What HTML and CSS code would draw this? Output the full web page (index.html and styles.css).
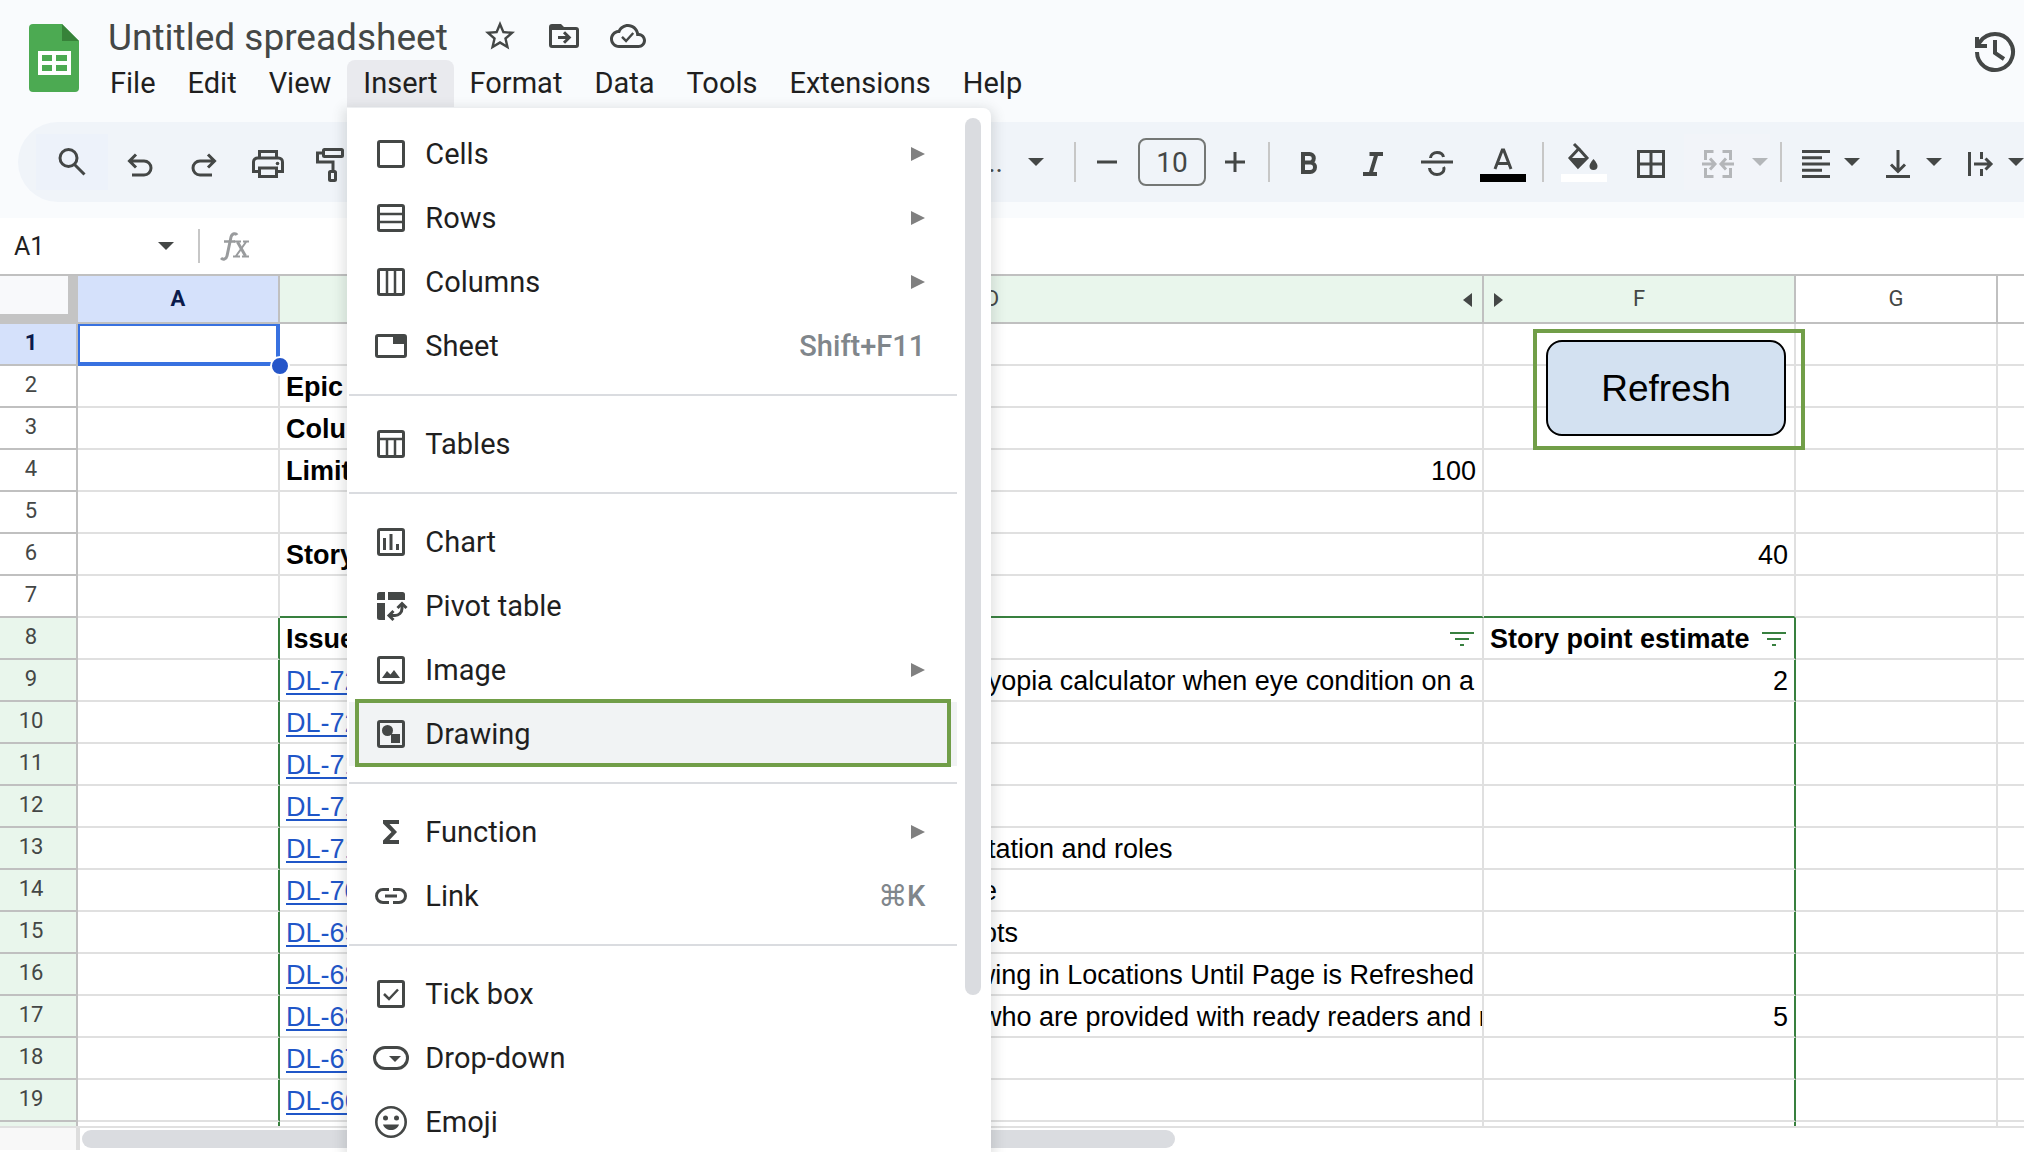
FILE: index.html
```html
<!DOCTYPE html>
<html lang="en">
<head>
<meta charset="utf-8">
<title>Untitled spreadsheet</title>
<link rel="stylesheet" href="styles.css">
</head>
<body>
<div class="app">
  <header class="header">
    <svg class="logo" viewBox="0 0 50 68" aria-hidden="true">
      <path fill="#4caa52" d="M4 0h29l17 17v47a4 4 0 0 1-4 4H4a4 4 0 0 1-4-4V4a4 4 0 0 1 4-4z"/>
      <path fill="#378239" d="M33 0l17 17H33z"/>
      <path fill="#fff" fill-rule="evenodd" d="M9 27h33v24H9zM13 31v6h10v-6zm14 0v6h11v-6zM13 41v6h10v-6zm14 0v6h11v-6z"/>
    </svg>
    <div class="heading">
      <div class="title-row">
        <h1 class="title">Untitled spreadsheet</h1>
        <button class="icon-button" aria-label="Star"><svg class="icon" viewBox="0 0 24 24"><path fill="currentColor" d="M22 9.24l-7.19-.62L12 2 9.19 8.63 2 9.24l5.46 4.73L5.82 21 12 17.27 18.18 21l-1.63-7.03L22 9.24zM12 15.4l-3.76 2.27 1-4.28-3.32-2.88 4.38-.38L12 6.1l1.71 4.04 4.38.38-3.32 2.88 1 4.28L12 15.4z"/></svg></button>
        <button class="icon-button" aria-label="Move"><svg class="icon" viewBox="0 0 24 24"><path fill="currentColor" d="M20 6h-8l-2-2H4a2 2 0 0 0-2 2v12a2 2 0 0 0 2 2h16a2 2 0 0 0 2-2V8a2 2 0 0 0-2-2zm0 12H4V8h16v10z"/><path fill="none" stroke="currentColor" stroke-width="2" d="M8 13h7M12 9.5l3.5 3.5-3.500 3.500"/></svg></button>
        <button class="icon-button" aria-label="Saved to Drive"><svg class="icon" viewBox="0 0 24 24"><path fill="currentColor" d="M19.350 10.040C18.670 6.590 15.640 4 12 4 9.110 4 6.600 5.640 5.350 8.040 2.340 8.360 0 10.910 0 14c0 3.310 2.690 6 6 6h13c2.760 0 5-2.240 5-5 0-2.640-2.050-4.780-4.650-4.960zM19 18H6c-2.210 0-4-1.790-4-4s1.790-4 4-4h.710C7.370 7.690 9.480 6 12 6c3.040 0 5.500 2.460 5.500 5.500v.5H19c1.660 0 3 1.340 3 3s-1.340 3-3 3z"/><path fill="none" stroke="currentColor" stroke-width="1.600" d="M8 12.600l2.700 2.700 4.800-5.300"/></svg></button>
      </div>
      <nav class="menubar" aria-label="Main menu">
        <button class="menu-button">File</button>
        <button class="menu-button">Edit</button>
        <button class="menu-button">View</button>
        <div class="menu-anchor">
          <button class="menu-button is-open" aria-expanded="true">Insert</button>
          <div class="dropdown" role="menu">
            <div class="group">
              <button class="item" role="menuitem"><svg class="icon line" viewBox="0 0 36 36"><rect x="5.500" y="5.500" width="25" height="25" rx="1.500"/></svg>Cells<span class="arrow"></span></button>
              <button class="item" role="menuitem"><svg class="icon line" viewBox="0 0 36 36"><rect x="5.500" y="5.500" width="25" height="25" rx="1.500"/><path stroke-width="2.500" d="M5 14h26M5 22h26"/></svg>Rows<span class="arrow"></span></button>
              <button class="item" role="menuitem"><svg class="icon line" viewBox="0 0 36 36"><rect x="5.500" y="5.500" width="25" height="25" rx="1.500"/><path stroke-width="2.500" d="M14 5v26M22 5v26"/></svg>Columns<span class="arrow"></span></button>
              <button class="item" role="menuitem"><svg class="icon line" viewBox="0 0 36 36"><rect x="3.500" y="7.500" width="29" height="21" rx="1.500"/><path class="solid" d="M20 7h12v9H20z"/></svg>Sheet<kbd class="shortcut">Shift+F11</kbd></button>
            </div>
            <div class="group">
              <button class="item" role="menuitem"><svg class="icon line" viewBox="0 0 36 36"><rect x="5.500" y="5.500" width="25" height="25" rx="1.500"/><path stroke-width="2.500" d="M5 13h26M14 13v18M22 13v18"/></svg>Tables</button>
            </div>
            <div class="group">
              <button class="item" role="menuitem"><svg class="icon line" viewBox="0 0 36 36"><rect x="5.500" y="5.500" width="25" height="25" rx="1.500"/><path d="M11.500 14v12M18 10v16M24.500 20v6"/></svg>Chart</button>
              <button class="item" role="menuitem"><svg class="icon line" viewBox="0 0 36 36"><path class="solid" d="M6.500 4H12v8H4V6.500A2.500 2.500 0 0 1 6.500 4zM15 4h14.500A2.500 2.500 0 0 1 32 6.500V12H15zM4 15h8v17H6.500A2.500 2.500 0 0 1 4 29.500z"/><path d="M17 27.500h5a7 7 0 0 0 7-7V17"/><path d="M24.500 20l4.500-4.500 4.500 4.500M20.500 23L16 27.500l4.500 4.500"/></svg>Pivot table</button>
              <button class="item" role="menuitem"><svg class="icon line" viewBox="0 0 36 36"><rect x="5.500" y="5.500" width="25" height="25" rx="1.500"/><path class="solid" d="M9 26l5-7 3.500 3.500L21 18l6 8z"/></svg>Image<span class="arrow"></span></button>
              <button class="item is-active" role="menuitem"><svg class="icon line" viewBox="0 0 36 36"><rect x="5.500" y="5.500" width="25" height="25" rx="1.500"/><circle class="solid" cx="14.500" cy="14.500" r="5.500"/><path class="solid" d="M18 18h9v9h-9z"/></svg>Drawing<span class="callout"></span></button>
            </div>
            <div class="group">
              <button class="item" role="menuitem"><svg class="icon" viewBox="0 0 36 36"><path fill="currentColor" d="M10 6h16v4H16.500l7.500 8-7.500 8H26v4H10v-3.500l8.500-8.500L10 9.500z"/></svg>Function<span class="arrow"></span></button>
              <button class="item" role="menuitem"><svg class="icon line" viewBox="0 0 36 36"><path d="M16 11.500h-6a6.500 6.500 0 0 0 0 13h6M20 11.500h6a6.500 6.500 0 0 1 0 13h-6M12 18h12"/></svg>Link<kbd class="shortcut">⌘K</kbd></button>
            </div>
            <div class="group">
              <button class="item" role="menuitem"><svg class="icon line" viewBox="0 0 36 36"><rect x="5.500" y="5.500" width="25" height="25" rx="1.500"/><path stroke-width="2.500" d="M11 18l5 5 9-9.500"/></svg>Tick box</button>
              <button class="item" role="menuitem"><svg class="icon line" viewBox="0 0 36 36"><rect x="1.500" y="7.500" width="33" height="21" rx="10.500"/><path class="solid" d="M16 16h12l-6 6z"/></svg>Drop-down</button>
              <button class="item" role="menuitem"><svg class="icon line" viewBox="0 0 36 36"><circle cx="18" cy="18" r="14.700" stroke-width="2.600"/><circle class="solid" cx="12.500" cy="14" r="2.500"/><circle class="solid" cx="23.500" cy="14" r="2.500"/><path class="solid" d="M10 20.500h16c-1 3.500-4.300 5.500-8 5.500s-7-2-8-5.500z"/></svg>Emoji</button>
            </div>
            <span class="menu-thumb"></span>
          </div>
        </div>
        <button class="menu-button">Format</button>
        <button class="menu-button">Data</button>
        <button class="menu-button">Tools</button>
        <button class="menu-button">Extensions</button>
        <button class="menu-button">Help</button>
      </nav>
    </div>
    <button class="icon-button history" aria-label="Version history"><svg viewBox="0 0 44 44" width="44" height="44"><path fill="none" stroke="currentColor" stroke-width="4" d="M4 22a18 18 0 1 0 3.500-10.700L4.500 15M4 7v9h10M22 10v13l9 6"/></svg></button>
  </header>

  <div class="toolbar" role="toolbar" aria-label="Formatting">
    <button class="tool search" aria-label="Search the menus"><svg class="icon line" viewBox="0 0 36 36"><circle cx="14.500" cy="14" r="8.500"/><path d="M20.500 20.500L30.500 30.500"/></svg></button>
    <button class="tool" aria-label="Undo"><svg class="icon line" viewBox="0 0 36 36"><path d="M14 10.500L7.500 17l6.500 6.500M8 17h14a7 7 0 0 1 0 14H10"/></svg></button>
    <button class="tool" aria-label="Redo"><svg class="icon line" viewBox="0 0 36 36"><path d="M22 10.500l6.500 6.500-6.500 6.500M28 17H14a7 7 0 0 0 0 14h12"/></svg></button>
    <button class="tool" aria-label="Print"><svg class="icon line" viewBox="0 0 36 36"><path d="M9.500 14V7.500h17V14M9 27.500H3.500V18a4 4 0 0 1 4-4h21a4 4 0 0 1 4 4v9.500H27"/><path d="M9.500 24h17v8.500h-17z"/><circle class="solid" cx="27.500" cy="19.500" r="1.800"/></svg></button>
    <button class="tool" aria-label="Paint format"><svg class="icon line" viewBox="0 0 36 36"><rect x="9.500" y="5.500" width="19" height="7" rx="1"/><path d="M9 9H3.500v9H19v9"/><rect x="15.500" y="27.500" width="6" height="9" rx="1"/></svg></button>
    <span class="covered"></span>
    <button class="font-name" aria-label="Font">Defaul...<span class="caret"></span></button>
    <span class="sep"></span>
    <button class="step" aria-label="Decrease font size"><svg class="icon line" viewBox="0 0 36 36"><path d="M8 18h20"/></svg></button>
    <input class="font-size" aria-label="Font size" value="10">
    <button class="step" aria-label="Increase font size"><svg class="icon line" viewBox="0 0 36 36"><path d="M8 18h20M18 8v20"/></svg></button>
    <span class="sep"></span>
    <button class="tool" aria-label="Bold"><svg class="icon" viewBox="0 0 36 36"><path fill="none" stroke="currentColor" stroke-width="4" d="M12 10h6.500a4.300 4.300 0 0 1 0 8.600H12zM12 18.600h7.300a4.700 4.700 0 0 1 0 9.400H12z"/></svg></button>
    <button class="tool" aria-label="Italic"><svg class="icon" viewBox="0 0 36 36"><path fill="none" stroke="currentColor" stroke-width="4" d="M14.500 10H28M8 30h14M21.500 10l-6 20"/></svg></button>
    <button class="tool" aria-label="Strikethrough"><svg class="icon line" viewBox="0 0 36 36"><path d="M2 18h32M11.500 14c0-3 3-5.500 6.500-5.500s6 2 6.500 4.500M10.500 24c0 3.500 3.500 6.500 7.500 6.500s7-2.500 7-5.500c0-.8-.2-1.400-.5-2"/></svg></button>
    <button class="tool text-colour" aria-label="Text colour"><svg class="icon line" viewBox="0 0 36 36"><path d="M10 25l7.300-19h1.400L26 25M12.500 19.500h11"/></svg><span class="swatch black"></span></button>
    <span class="sep"></span>
    <button class="tool wide" aria-label="Fill colour"><svg class="icon line" viewBox="0 0 36 36"><path d="M8 0l6 6M13 5l8 9-9 9-8-9 8-8.500"/><path class="solid" d="M3 14h19L12 24z"/><path class="solid" d="M27.500 15s4 4.500 4 7a4 4 0 0 1-8 0c0-2.500 4-7 4-7z"/></svg><span class="swatch white"></span></button>
    <button class="tool wide" aria-label="Borders"><svg class="icon line" viewBox="0 0 36 36"><path d="M5.500 7.500h25v25h-25zM18 8v24M5 20h26"/></svg></button>
    <button class="tool wide muted" aria-label="Merge cells"><svg class="icon line" viewBox="0 0 36 36"><path d="M13.500 7.500h-8V16M22.500 7.500h8V16M13.500 32.500h-8V24M22.500 32.500h8V24M2 20h12M10 14.500l5 5.500-5 5.500M34 20H22M26 14.500L21 20l5 5.500"/></svg></button>
    <button class="merge-caret muted" aria-label="Merge options"><span class="caret"></span></button>
    <span class="sep"></span>
    <button class="split" aria-label="Horizontal align"><svg class="icon line" viewBox="0 0 28 36"><path d="M0 7.500h28M0 13.700h20M0 20h28M0 26.300h20M0 32.500h28"/></svg><span class="caret"></span></button>
    <button class="split" aria-label="Vertical align"><svg class="icon line" viewBox="0 0 28 36"><path d="M14 6v21M7 20.500l7 7 7-7M2 32.500h24"/></svg><span class="caret"></span></button>
    <button class="split" aria-label="Text wrapping"><svg class="icon line" viewBox="0 0 28 36"><path d="M3.500 8v24M15.500 8v7M15.500 25v7M8 20h16M19.500 14.500L25 20l-5.500 5.500"/></svg><span class="caret"></span></button>
  </div>

  <div class="formula-bar">
    <input class="name-box" aria-label="Name box" value="A1">
    <span class="caret"></span>
    <span class="bar-line"></span>
    <svg class="fx" viewBox="0 0 30 30" aria-hidden="true"><g fill="none" stroke="#999b9d"><path stroke-width="3" d="M17 4c-1-2-5-2-6 2L7 25c-.8 3.500-4 4-6 2"/><path stroke-width="2.500" d="M4 10.500h11"/><path stroke-width="3" d="M17.500 11l8 14"/><path stroke-width="2" d="M26 11l-10 14M14 10.500h7M23 10.500h6M13 25.500h7M22 25.500h7"/></g></svg>
    <input class="formula" aria-label="Formula">
  </div>

  <main class="grid">
    <table class="sheet">
      <colgroup><col class="c-head"><col class="c-a"><col class="c-b"><col class="c-c"><col class="c-d"><col class="c-f"><col class="c-a"><col></colgroup>
      <thead>
        <tr><th class="corner"></th><th class="selected">A</th><th class="ranged">B</th><th class="ranged">C</th><th class="ranged">D<span class="reveal left"></span></th><th class="ranged">F<span class="reveal right"></span></th><th>G</th><th></th></tr>
      </thead>
      <tbody>
        <tr><th class="selected">1</th><td><div class="selection"></div></td><td></td><td></td><td></td><td><div class="refresh-frame"><button class="refresh">Refresh</button></div></td><td></td><td></td></tr>
        <tr><th>2</th><td></td><td><b>Epic</b></td><td></td><td></td><td></td><td></td><td></td></tr>
        <tr><th>3</th><td></td><td><b>Column</b></td><td></td><td></td><td></td><td></td><td></td></tr>
        <tr><th>4</th><td></td><td><b>Limit</b></td><td></td><td class="num">100</td><td></td><td></td><td></td></tr>
        <tr><th>5</th><td></td><td></td><td></td><td></td><td></td><td></td><td></td></tr>
        <tr><th>6</th><td></td><td><b>Story</b></td><td></td><td></td><td class="num">40</td><td></td><td></td></tr>
        <tr class="before-range"><th>7</th><td></td><td></td><td></td><td></td><td></td><td></td><td></td></tr>
      </tbody>
      <tbody class="range">
        <tr><th>8</th><td></td><td><b>Issue</b></td><td></td><td><svg class="filter" viewBox="0 0 24 14"><path d="M0 1h24M5 7h14M10 13h4"/></svg></td><td><svg class="filter" viewBox="0 0 24 14"><path d="M0 1h24M5 7h14M10 13h4"/></svg><b>Story point estimate</b></td><td></td><td></td></tr>
        <tr><th>9</th><td></td><td><a href="#">DL-72</a></td><td></td><td class="full">byopia calculator when eye condition on a</td><td class="num">2</td><td></td><td></td></tr>
        <tr><th>10</th><td></td><td><a href="#">DL-72</a></td><td></td><td></td><td></td><td></td><td></td></tr>
        <tr><th>11</th><td></td><td><a href="#">DL-71</a></td><td></td><td></td><td></td><td></td><td></td></tr>
        <tr><th>12</th><td></td><td><a href="#">DL-71</a></td><td></td><td></td><td></td><td></td><td></td></tr>
        <tr><th>13</th><td></td><td><a href="#">DL-71</a></td><td></td><td class="tail">itation and roles</td><td></td><td></td><td></td></tr>
        <tr><th>14</th><td></td><td><a href="#">DL-70</a></td><td></td><td class="tail">e</td><td></td><td></td><td></td></tr>
        <tr><th>15</th><td></td><td><a href="#">DL-69</a></td><td></td><td class="tail">ots</td><td></td><td></td><td></td></tr>
        <tr><th>16</th><td></td><td><a href="#">DL-68</a></td><td></td><td class="full">wing in Locations Until Page is Refreshed</td><td></td><td></td><td></td></tr>
        <tr><th>17</th><td></td><td><a href="#">DL-68</a></td><td></td><td class="tail">who are provided with ready readers and r</td><td class="num">5</td><td></td><td></td></tr>
        <tr><th>18</th><td></td><td><a href="#">DL-67</a></td><td></td><td></td><td></td><td></td><td></td></tr>
        <tr><th>19</th><td></td><td><a href="#">DL-66</a></td><td></td><td></td><td></td><td></td><td></td></tr>
        <tr><th></th><td></td><td></td><td></td><td></td><td></td><td></td><td></td></tr>
      </tbody>
    </table>
  </main>

  <footer class="scroll-row">
    <span class="scroll-corner"></span>
    <span class="scroll-thumb"></span>
  </footer>
</div>
</body>
</html>
```

FILE: styles.css
```css
* {
  box-sizing: border-box;
}

body {
  margin: 0;
  font-family: Roboto, "Liberation Sans", sans-serif;
  color: #1f1f1f;
}

button,
input {
  margin: 0;
  padding: 0;
  border: 0;
  background: none;
  font: inherit;
  color: inherit;
}

.app {
  display: flex;
  flex-direction: column;
  height: 100vh;
  overflow: hidden;
  background: #f9fbfd;
}

.icon {
  display: block;
  flex: none;
  height: 36px;
  color: #444746;
  overflow: visible;
}

.line {
  fill: none;
  stroke: currentColor;
  stroke-width: 3;
}

.solid {
  fill: currentColor;
  stroke: none;
}

.caret {
  flex: none;
  border: 8px solid transparent;
  border-top-color: #444746;
  border-bottom: 0;
}

/* Header */

.header {
  display: flex;
  flex: none;
  gap: 15px;
  height: 108px;
  padding: 0 7px 0 29px;
}

.logo {
  flex: none;
  width: 50px;
  height: 68px;
  margin-top: 24px;
}

.title-row {
  display: flex;
  align-items: center;
  gap: 28px;
  height: 60px;
  padding: 12px 0 0 14px;
}

.title {
  margin: 0;
  padding: 4px 6px 0 0;
  font-size: 37px;
  font-weight: 400;
  line-height: 44px;
  color: #444746;
  white-space: nowrap;
}

.icon-button {
  flex: none;
  color: #444746;
}

.menubar {
  display: flex;
}

.menu-button {
  height: 47px;
  padding: 0 16px;
  border-radius: 8px 8px 0 0;
  font-size: 29px;
  line-height: 47px;
}

.menu-button.is-open {
  background: #e9eaee;
}

.history {
  align-self: flex-start;
  height: 44px;
  margin: 30px 0 0 auto;
}

/* Insert menu */

.menu-anchor {
  position: relative;
}

.dropdown {
  position: absolute;
  z-index: 10;
  top: 48px;
  left: 0;
  width: 644px;
  height: calc(100vh - 108px);
  padding: 14px 34px 0 2px;
  border-radius: 0 8px 0 0;
  background: #fff;
  box-shadow: 0 4px 12px 4px rgba(60, 64, 67, 0.15);
}

.group + .group {
  margin-top: 16px;
  padding-top: 16px;
  border-top: 2px solid #dadce0;
}

.item {
  position: relative;
  display: flex;
  align-items: center;
  gap: 16px;
  width: 100%;
  height: 64px;
  padding: 0 32px 0 24px;
  font-size: 29px;
  line-height: 62px;
  text-align: left;
}

.item .icon {
  width: 36px;
}

.item.is-active {
  background: #f1f3f4;
}

.arrow {
  margin-left: auto;
  border: 7px solid transparent;
  border-left: 14px solid #808080;
  border-right: 0;
}

.shortcut {
  margin-left: auto;
  font-family: Roboto, "DejaVu Sans", sans-serif;
  font-weight: 500;
  color: #80868b;
}

.callout {
  position: absolute;
  inset: -3px 6px -1px 6px;
  border: 4px solid #719e48;
}

.menu-thumb {
  position: absolute;
  top: 10px;
  right: 10px;
  width: 16px;
  height: 84%;
  border-radius: 8px;
  background: #dadce0;
}

/* Toolbar */

.toolbar {
  display: flex;
  flex: none;
  align-items: center;
  height: 80px;
  margin: 14px 0 16px 18px;
  padding-left: 18px;
  border-radius: 40px 0 0 40px;
  background: #f0f4f9;
  overflow: hidden;
}

.tool {
  display: flex;
  flex: none;
  align-items: center;
  justify-content: center;
  position: relative;
  width: 64px;
  height: 56px;
}

.tool .icon,
.step .icon {
  width: 36px;
}

.tool.search {
  width: 72px;
  background: #edf2fa;
}

.tool.wide,
.tool.text-colour {
  width: 67px;
}

.muted {
  background: #f2f4f9;
}

.muted .icon {
  color: #b4b6b9;
}

.muted .caret {
  border-top-color: #b4b6b9;
}

.covered {
  flex: none;
  width: 536px;
}

.font-name {
  display: flex;
  flex: none;
  align-items: center;
  justify-content: flex-end;
  gap: 25px;
  width: 148px;
  padding-right: 4px;
  font-size: 28px;
  color: #444746;
}

.sep {
  flex: none;
  width: 2px;
  height: 40px;
  margin: 0 7px 0 10px;
  background: #c7c7c7;
}

.font-name + .sep {
  margin: 0 11px 0 26px;
}

.step + .sep {
  margin-left: 13px;
}

.text-colour + .sep {
  margin: 0 6px 0 6px;
}

.step {
  flex: none;
  display: flex;
  justify-content: center;
  width: 40px;
}

.font-size {
  flex: none;
  width: 68px;
  height: 48px;
  margin: 0 9px 0 11px;
  border: 2px solid #747775;
  border-radius: 8px;
  font-size: 28px;
  color: #444746;
  text-align: center;
}

.swatch {
  position: absolute;
  bottom: 8px;
  width: 46px;
  height: 8px;
}

.black {
  background: #000;
}

.white {
  background: #fff;
}

.merge-caret {
  display: flex;
  flex: none;
  align-items: center;
  width: 19px;
  height: 56px;
  padding-left: 1px;
}

.merge-caret + .sep {
  margin-right: 18px;
}

.split {
  display: flex;
  flex: none;
  align-items: center;
  gap: 14px;
  width: 82px;
  padding-left: 2px;
}

.split .icon {
  width: 28px;
}

/* Formula bar */

.formula-bar {
  display: flex;
  flex: none;
  align-items: center;
  height: 56px;
  padding-left: 14px;
  background: #fff;
}

.name-box {
  width: 144px;
  font-size: 25px;
  color: #1f1f1f;
}

.bar-line {
  width: 2px;
  height: 34px;
  margin: 0 20px 0 24px;
  background: #c7c7c7;
}

.fx {
  width: 30px;
  height: 30px;
}

.formula {
  flex: 1;
  margin-left: 12px;
}

/* Grid */

.grid {
  flex: 1;
  min-height: 0;
  overflow: hidden;
  border-top: 2px solid #c0c0c0;
  background: #fff;
}

.sheet {
  width: 100%;
  table-layout: fixed;
  border-collapse: separate;
  border-spacing: 0;
  font-family: "Liberation Sans", Arial, sans-serif;
  font-size: 27px;
  line-height: 40px;
  color: #000;
}

.c-head {
  width: 78px;
}

.c-a {
  width: 202px;
}

.c-b {
  width: 160px;
}

.c-c {
  width: 62px;
}

.c-d {
  width: 982px;
}

.c-f {
  width: 312px;
}

.sheet th,
.sheet td {
  position: relative;
  height: 42px;
  padding: 0;
  border-right: 2px solid #e0e0e0;
  border-bottom: 2px solid #e0e0e0;
  white-space: nowrap;
}

.sheet th {
  border-color: #c0c0c0;
  font-family: Roboto, "Liberation Sans", sans-serif;
  font-size: 22px;
  font-weight: 400;
  color: #444746;
  text-align: center;
}

.sheet thead th {
  height: 48px;
  line-height: 46px;
}

.sheet tbody th {
  padding-right: 14px;
  line-height: 37px;
  vertical-align: top;
}

.sheet .selected {
  background: #d5e1fb;
  font-weight: 700;
  color: #0b1b4b;
}

.sheet .ranged,
.range th {
  background: #e9f6ec;
}

.sheet .corner {
  border-right: 10px solid #c4c4c4;
  border-bottom: 10px solid #c4c4c4;
  background: #f8f9fb;
}

.sheet td {
  padding: 2px 6px 0;
  line-height: 38px;
  vertical-align: top;
}

.sheet tr > :last-child {
  border-right: 0;
}

.sheet .num {
  text-align: right;
}

.sheet .full {
  padding-right: 8px;
  overflow: hidden;
  text-align: right;
}

.sheet .tail {
  padding: 2px 0 0 480px;
  overflow: hidden;
}

.sheet a {
  color: #1f56c8;
  text-decoration-thickness: 2px;
  text-underline-offset: 3px;
}

.before-range td:nth-child(n + 3):nth-child(-n + 6) {
  border-bottom-color: #38803f;
}

.range td:nth-child(2),
.range td:nth-child(6) {
  border-right-color: #38803f;
}

.filter {
  float: right;
  width: 24px;
  height: 14px;
  margin: 12px 2px 0 0;
  fill: none;
  stroke: #38803f;
  stroke-width: 2;
}

.reveal {
  position: absolute;
  top: 17px;
  border: 7px solid transparent;
}

.reveal.left {
  right: 10px;
  border-right: 9px solid #444746;
  border-left: 0;
}

.reveal.right {
  left: 10px;
  border-left: 9px solid #444746;
  border-right: 0;
}

.selection {
  position: absolute;
  z-index: 1;
  inset: 0 -2px -2px 0;
  border: 2px solid #3871e0;
  border-right-width: 4px;
  border-bottom-width: 4px;
}

.selection::after {
  content: "";
  position: absolute;
  right: -14px;
  bottom: -14px;
  width: 16px;
  height: 16px;
  border: 2px solid #fff;
  border-radius: 50%;
  background: #2656c9;
}

.refresh-frame {
  position: absolute;
  z-index: 1;
  top: 5px;
  left: 49px;
  padding: 7px 15px 10px 9px;
  border: 4px solid #719e48;
}

.refresh {
  display: block;
  width: 240px;
  height: 96px;
  padding-top: 2px;
  border: 2px solid #000;
  border-radius: 16px;
  background: #d3e1f1;
  font-family: "Liberation Sans", Arial, sans-serif;
  font-size: 37px;
  color: #000;
}

/* Horizontal scrollbar */

.scroll-row {
  display: flex;
  flex: none;
  align-items: center;
  gap: 2px;
  height: 26px;
  padding-bottom: 2px;
  border-top: 2px solid #e0e0e0;
  background: #fff;
}

.scroll-corner {
  align-self: stretch;
  width: 80px;
  border-right: 4px solid #ddd;
  background: #f8f8f8;
}

.scroll-thumb {
  width: 54%;
  height: 18px;
  border-radius: 9px;
  background: #dadce0;
}
```
